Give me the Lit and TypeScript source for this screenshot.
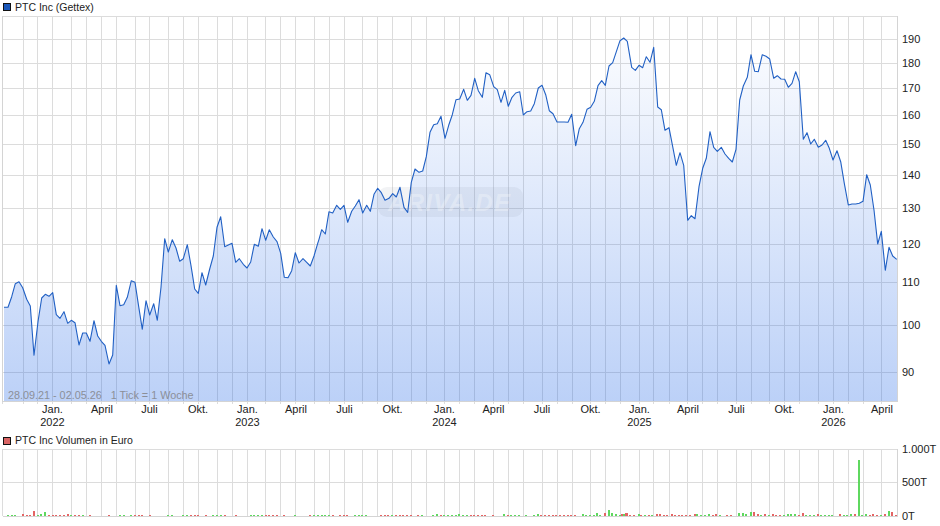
import { LitElement, html, css, svg } from "lit";
import { customElement } from "lit/decorators.js";

const VX = [2.5,23.5,37.5,52.5,71.5,86.5,101.5,116.5,135.5,149.5,168.5,183.5,198.5,217.5,232.5,247.5,265.5,280.5,295.5,314.5,329.5,344.5,362.5,377.5,392.5,411.5,426.5,444.5,459.5,474.5,493.5,508.5,523.5,542.5,557.5,572.5,590.5,605.5,620.5,639.5,653.5,669.5,687.5,702.5,717.5,736.5,751.5,769.5,784.5,799.5,818.5,833.5,848.5,863.5,881.5];
const HY: [number, string][] = [[39,"190"],[63,"180"],[88,"170"],[115,"160"],[144,"150"],[175,"140"],[208,"130"],[244,"120"],[282,"110"],[325,"100"],[372,"90"]];
const MONTHS: [number, string, string?][] = [[52.5,"Jan.","2022"],[102,"April"],[149.5,"Juli"],[198,"Okt."],[247.5,"Jan.","2023"],[296,"April"],[344.5,"Juli"],[392.5,"Okt."],[444.5,"Jan.","2024"],[493.5,"April"],[542,"Juli"],[590.5,"Okt."],[639.5,"Jan.","2025"],[688,"April"],[736.5,"Juli"],[784.5,"Okt."],[833.5,"Jan.","2026"],[882,"April"]];

const seg = (ox: number, oy: number, p: number[]) => {
  const r: [number, number][] = [];
  for (let i = 0; i < p.length; i += 2) r.push([ox + p[i] / 3, oy + p[i + 1] / 3]);
  return r;
};
const POINTS: [number, number][] = [
  ...seg(0, 180, [12,382,24,382,35,350,46,311,57,305,68,323,80,358,91,378,102,526,114,425,125,354,136,343,147,349,158,338,169,404,180,415,192,395,203,430,214,421,225,428,237,495,248,459,259,459,270,484,282,422,293,468,304,484,315,496,327,552,338,525,349,316,360,377,371,374,382,352,394,302,405,307,416,380,427,448,438,362,449,405,461,371,472,421,483,322,494,176,505,216,517,179,528,204,539,244,550,236,562,194,573,257,584,327,595,340,606,278,617,315,629,267,640,228,651,142,662,110,674,200,685,195,696,190,707,247,718,236,730,253,741,264,752,246,763,193,775,199,786,146,797,181,808,149,820,171,831,185,842,220,853,292,864,293,875,272,886,218,897,249,909,236,920,247,931,258,942,228,953,190]),
  ...seg(310, 60, [27,538,35,509,46,522,57,455,68,459,80,436,91,448,102,436,113,487,125,454,136,438,147,419,158,459,170,436,181,454,192,403,203,385,214,398,225,421,237,415,248,401,259,411,270,382,282,442,293,457,304,367,315,327,327,337,338,333,349,290,360,217,371,194,382,191,393,169,405,235,416,196,427,164,438,119,449,117,461,88,472,121,483,106,494,55,505,92,517,112,528,38,539,44,551,80,562,89,573,127,584,91,595,139,606,112,617,99,629,95,640,165,651,155,662,153,673,131,685,84,696,76,707,104,718,152,729,161,741,186,752,186,763,186,774,187,785,163,797,257,808,206,819,187,831,148,842,142,853,124,864,77,875,62,886,76,897,18,908,8]),
  ...seg(620, 20, [0,62,11,54,22,64,35,142,46,151,57,136,68,143,79,110,90,127,101,82,113,261,124,269,135,331,147,323,158,380,169,436,180,398,191,436,203,601,214,587,225,596,237,500,248,445,259,415,270,335,281,382,292,394,304,382,315,402,326,415,337,426,348,388,359,240,370,198,382,172,393,104,404,154,415,155,427,104,438,109,449,117,461,175,472,167,483,177,494,178,505,202,516,190,527,155,538,185,550,358,561,338,572,372,583,358,595,382,606,375,617,361,628,385,639,420,651,392,662,425,673,490,685,555,696,552,707,552,718,550,729,544,740,464,751,495,762,570,773,672,784,634,796,751,807,682,818,708,830,718]),
];

const g: [number, number, number][] = [];
const add = (ox: number, p: (number | string)[]) => {
  for (let i = 0; i < p.length; i += 3) g.push([ox + (p[i] as number) / 3, p[i + 1] === "g" ? 1 : 0, p[i + 2] as number]);
};
add(0, [24,"g",1,35,"g",1,46,"g",1,68,"r",2,80,"r",1,91,"r",1,102,"r",5,113,"g",1,124,"g",2,135,"g",4,147,"r",1,158,"r",1,169,"r",1,180,"r",1,192,"r",1,203,"r",2,214,"g",1,225,"r",1,237,"r",1,248,"g",1,270,"r",1,326,"r",1,360,"g",1,371,"g",1,394,"g",1,405,"r",1,416,"r",1,427,"r",1,449,"r",1,505,"g",1,517,"g",1,550,"g",1,562,"g",1,573,"r",1,584,"r",1,595,"r",1,617,"r",1,640,"g",1,651,"g",1,662,"g",1,674,"r",1,707,"r",1,752,"g",1,763,"g",1,775,"g",1,786,"g",1,797,"r",1,808,"r",1,820,"r",1,831,"r",1,853,"r",1,886,"g",1,931,"r",1,942,"g",1,953,"g",1]);
add(310, [13,"g",1,24,"g",1,35,"g",1,46,"g",1,57,"g",1,68,"r",1,90,"r",1,101,"r",1,112,"r",1,135,"g",1,146,"g",1,157,"g",1,168,"g",1,213,"r",1,224,"r",1,235,"r",1,247,"g",1,258,"r",1,269,"r",1,280,"r",1,291,"r",1,303,"r",1,325,"r",1,336,"g",1,370,"g",1,381,"g",2,392,"r",1,403,"g",1,414,"g",1,425,"g",1,437,"g",1,448,"g",2,459,"g",1,470,"g",1,482,"r",1,493,"r",1,504,"r",1,515,"r",1,526,"r",1,549,"r",1,582,"g",2,593,"r",1,604,"g",1,615,"g",1,627,"g",1,649,"g",1,672,"g",1,683,"g",2,694,"r",1,705,"r",1,717,"r",1,728,"r",1,739,"r",1,750,"r",1,761,"r",1,773,"r",1,784,"r",1,795,"r",1,818,"g",2,829,"g",1,841,"g",1,852,"g",1,860,"g",3,871,"g",1,884,"r",3,896,"g",6,907,"g",3,918,"g",2,930,"g",1,941,"g",2,952,"r",3]);
add(620, [7,"r",2,18,"r",3,30,"r",1,41,"r",1,56,"g",2,64,"r",1,75,"g",1,86,"r",1,97,"g",1,110,"r",2,120,"r",2,131,"r",1,142,"r",1,157,"r",2,165,"r",1,176,"r",1,187,"r",1,199,"r",1,210,"r",1,225,"r",2,232,"g",2,244,"g",1,255,"g",1,266,"g",2,278,"r",1,289,"r",2,300,"g",1,322,"r",1,334,"r",1,356,"g",3,368,"g",3,379,"g",2,392,"g",4,402,"r",4,413,"r",2,424,"g",1,435,"r",2,446,"g",1,458,"r",2,469,"r",1,480,"r",1,491,"g",1,503,"g",2,514,"g",2,525,"g",2,536,"r",1,548,"r",3,559,"g",1,570,"g",1,582,"g",1,593,"r",2,604,"g",1,615,"g",1,626,"g",1,637,"g",1,660,"r",2,671,"g",1,682,"g",1,693,"g",2,704,"r",2,716,"g",56,727,"g",1,738,"g",2,749,"r",1,760,"r",2,771,"r",1,782,"g",1,795,"r",2,806,"g",5,816,"r",4,827,"r",1]);

const line = POINTS.map(([x, y]) => `${x.toFixed(1)},${y.toFixed(1)}`).join(" ");
const area = `M${POINTS[0][0].toFixed(1)},401.5 L${line.replace(/ /g, " L")} L897,${POINTS[POINTS.length - 1][1].toFixed(1)} L897,401.5 Z`;

@customElement("app-root")
export class AppRoot extends LitElement {
  static styles = css`
    :host { display: block; width: 940px; height: 526px; background: #fff; font-family: "Liberation Sans", Arial, sans-serif; overflow: hidden; }
    .chart { display: block; }
    .legend { display: flex; align-items: center; gap: 4px; font-size: 10.5px; line-height: 11px; color: #222; padding-left: 3px; box-sizing: border-box; }
    .top { height: 13px; padding-top: 1px; }
    .vol { height: 11px; padding-top: 4px; }
    .swatch { width: 8px; height: 8px; border: 1px solid #111; box-sizing: border-box; flex: none; }
    .blue { background: #1a57b9; }
    .red { background: #d96464; }
    text { font-family: "Liberation Sans", Arial, sans-serif; font-size: 11px; fill: #222; }
    .range { font-size: 10.8px; fill: #8b8f98; }
    .mark { font-size: 24px; font-weight: bold; font-style: italic; fill: #fff; fill-opacity: .3; }
    .grid { stroke: #dcdcdc; stroke-width: 1; fill: none; shape-rendering: crispEdges; }
    .frame { stroke: #d4d4d4; stroke-width: 1; fill: none; shape-rendering: crispEdges; }
    .priceline { fill: none; stroke: #2160c4; stroke-width: 1.1; stroke-linejoin: round; }
  `;

  render() {
    return html`
      <div class="legend top"><span class="swatch blue"></span><span>PTC Inc (Gettex)</span></div>
      ${this.price()}
      <div class="legend vol"><span class="swatch red"></span><span>PTC Inc Volumen in Euro</span></div>
      ${this.volume()}
    `;
  }

  private price() {
    return html`<svg class="chart" width="940" height="420" viewBox="0 13 940 420">
      <defs>
        <linearGradient id="fade" gradientUnits="userSpaceOnUse" x1="0" y1="16" x2="0" y2="402">
          <stop offset="0" stop-color="#1e64e6" stop-opacity="0"/>
          <stop offset="1" stop-color="#1e64e6" stop-opacity=".3"/>
        </linearGradient>
      </defs>
      ${VX.map((x) => svg`<line class="grid" x1=${x} x2=${x} y1="16" y2="401"></line><line class="grid" x1=${x} x2=${x} y1="402" y2="404"></line>`)}
      ${HY.map(([y]) => svg`<line class="grid" x1="3" x2="898" y1=${y + 0.5} y2=${y + 0.5}></line>`)}
      <line class="grid" x1="3" x2="898" y1="16.5" y2="16.5"></line>
      <path d=${area} fill="url(#fade)"></path>
      <rect x="378" y="187" width="145" height="30" rx="9" fill="#808a9c" fill-opacity=".1"></rect>
      <text class="mark" x="388" y="211" textLength="122" lengthAdjust="spacing">ARIVA.DE</text>
      <polyline class="priceline" points=${line}></polyline>
      <line class="frame" x1="2.5" x2="2.5" y1="16" y2="402"></line>
      <line class="frame" x1="3" x2="898" y1="401.5" y2="401.5"></line>
      <line class="frame" x1="897.5" x2="897.5" y1="16" y2="402"></line>
      <text class="range" x="8" y="399" xml:space="preserve">28.09.21 - 02.05.26   1 Tick = 1 Woche</text>
      ${HY.map(([y, t]) => svg`<text x="902" y=${y + 4}>${t}</text>`)}
      ${MONTHS.map(([x, m, yr]) => svg`<text x=${x} y="413" text-anchor="middle">${m}</text>${yr ? svg`<text x=${x} y="426" text-anchor="middle">${yr}</text>` : ""}`)}
    </svg>`;
  }

  private volume() {
    return html`<svg class="chart" width="940" height="82" viewBox="0 444 940 82">
      ${VX.map((x) => svg`<line class="grid" x1=${x} x2=${x} y1="449" y2="516"></line>`)}
      <line class="grid" x1="3" x2="898" y1="449.5" y2="449.5"></line>
      <line class="grid" x1="3" x2="898" y1="482.5" y2="482.5"></line>
      <line class="frame" x1="3" x2="898" y1="516.5" y2="516.5"></line>
      <line class="frame" x1="897.5" x2="897.5" y1="449" y2="517"></line>
      ${g.map(([x, c, h]) => svg`<rect x=${Math.round(x - 1)} y=${516 - h} width="2" height=${h} fill=${c ? "#5fd85f" : "#e46464"} shape-rendering="crispEdges"></rect>`)}
      <text x="902" y="453">1.000T</text>
      <text x="902" y="486">500T</text>
      <text x="902" y="520">0T</text>
    </svg>`;
  }
}
